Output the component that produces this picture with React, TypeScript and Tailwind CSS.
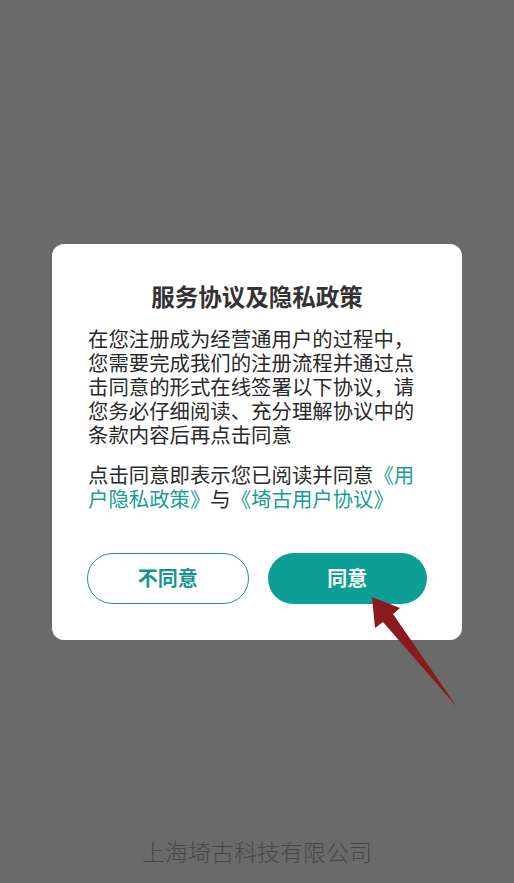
import React from "react";

const font = { fontFamily: '"Noto Sans CJK SC", "Noto Sans", sans-serif' };

export default function App() {
  return (
    <div
      className="relative w-[514px] h-[883px] bg-[#6a6a6a] overflow-hidden flex flex-col"
      style={font}
    >
      <div className="mt-auto pb-[17px] flex justify-center">
        <span className="text-[23px] leading-[30px] font-light text-[#474747]">
          上海埼古科技有限公司
        </span>
      </div>

      <div className="absolute inset-0 flex items-center justify-center">
        <div className="relative w-[410px] bg-white rounded-[12px] px-[35px] pt-[37px] pb-[36px]">
          <h1 className="text-center text-[23.5px] leading-[30px] font-bold text-[#333333]">
            服务协议及隐私政策
          </h1>
          <p className="mt-[15px] pl-[1px] text-[20.4px] leading-[24px] text-[#2a2a2a]">
            在您注册成为经营通用户的过程中，您需要完成我们的注册流程并通过点击同意的形式在线签署以下协议，请您务必仔细阅读、充分理解协议中的条款内容后再点击同意
          </p>
          <p className="mt-[16px] pl-[1px] text-[20.4px] leading-[24px] text-[#2a2a2a]">
            点击同意即表示您已阅读并同意
            <span className="text-[#1a9d95]">《用户隐私政策》</span>与
            <span className="text-[#1a9d95]">《埼古用户协议》</span>
          </p>
          <div className="mt-[43px] flex gap-[19px]">
            <button className="flex-1 h-[51px] rounded-full border-[1.5px] border-[#15968e] bg-white text-[20px] font-bold text-[#15968e]">
              不同意
            </button>
            <button className="flex-1 h-[51px] rounded-full bg-[#0d9f96] text-[20px] font-bold text-white">
              同意
            </button>
          </div>
        </div>
      </div>

      <svg
        className="absolute left-0 top-0 pointer-events-none"
        width="514"
        height="883"
        viewBox="0 0 514 883"
      >
        <polygon
          points="372,597 400,608 393,614 457,707 383,622 375,628"
          fill="#8b1a1c"
        />
      </svg>
    </div>
  );
}
